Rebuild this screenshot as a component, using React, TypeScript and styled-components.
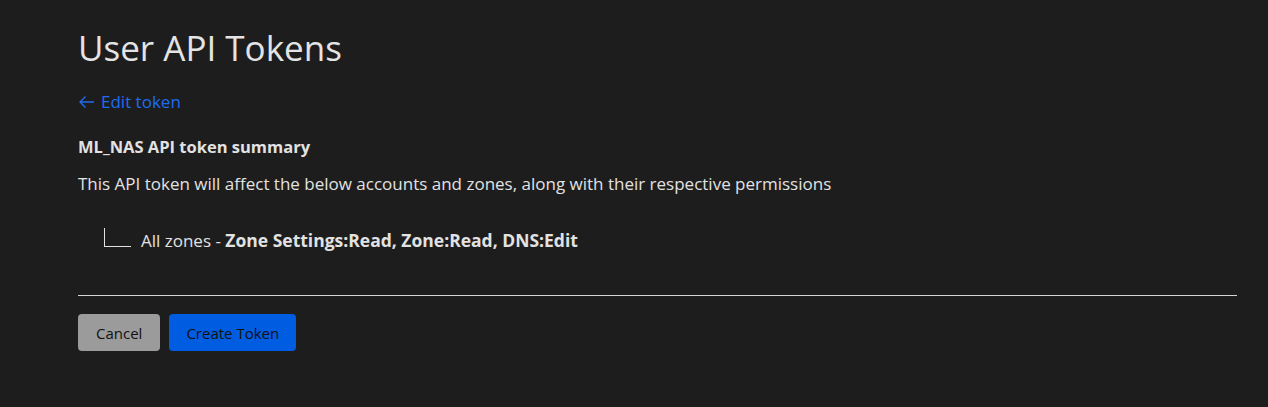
import React from 'react'
import styled, { createGlobalStyle } from 'styled-components'

const GlobalStyle = createGlobalStyle`
  html, body {
    margin: 0;
    padding: 0;
    background: #1d1d1d;
  }
  body {
    font-family: "Open Sans", "Noto Sans", sans-serif;
    color: #e2e2e2;
  }
`

const Page = styled.div`
  min-height: 407px;
  box-sizing: border-box;
  padding: 26px 31px 0 78px;
  background: #1d1d1d;
`

const Title = styled.h1`
  margin: 0;
  font-size: 35px;
  font-weight: 500;
  line-height: 44px;
  color: #e4e4e4;
`

const BackLink = styled.a`
  display: inline-flex;
  align-items: center;
  gap: 6px;
  margin-top: 21px;
  font-size: 17px;
  line-height: 22px;
  color: #1f6cf0;
  text-decoration: none;
  cursor: pointer;
`

const SectionTitle = styled.h2`
  margin: 22px 0 0;
  font-size: 16.5px;
  font-weight: 700;
  line-height: 22px;
  color: #e2e2e2;
`

const Description = styled.p`
  margin: 15px 0 0;
  font-size: 17px;
  line-height: 22px;
  color: #e2e2e2;
`

const Tree = styled.div`
  display: flex;
  align-items: flex-end;
  gap: 10px;
  margin: 33px 0 0 26px;
`

const Branch = styled.span`
  display: block;
  width: 26px;
  height: 18px;
  border-left: 1px solid #e2e2e2;
  border-bottom: 1px solid #e2e2e2;
  margin-bottom: 5px;
`

const TreeText = styled.span`
  font-size: 17px;
  line-height: 22px;
  strong {
    font-size: 17.5px;
    font-weight: 700;
  }
`

const Divider = styled.hr`
  margin: 43px 0 0;
  border: none;
  border-top: 1px solid #d6d6d6;
`

const Actions = styled.div`
  display: flex;
  gap: 9px;
  margin-top: 18px;
`

const Button = styled.button<{ $primary?: boolean }>`
  height: 37px;
  padding: 0 ${p => (p.$primary ? '17px' : '18px')};
  border: none;
  border-radius: 4px;
  font-family: "Open Sans", "Noto Sans", sans-serif;
  font-size: 15px;
  color: #111;
  background: ${p => (p.$primary ? '#005ce0' : '#9b9b9b')};
  cursor: pointer;
`

function ArrowLeft() {
  return (
    <svg width="17" height="14" viewBox="0 0 17 14" fill="none" stroke="#1f6cf0" strokeWidth="1.4">
      <path d="M16 7H2M7.5 1.5L2 7l5.5 5.5" />
    </svg>
  )
}

export default function App() {
  return (
    <>
      <GlobalStyle />
      <Page>
        <Title>User API Tokens</Title>
        <BackLink>
          <ArrowLeft />
          Edit token
        </BackLink>
        <SectionTitle>ML_NAS API token summary</SectionTitle>
        <Description>
          This API token will affect the below accounts and zones, along with their respective permissions
        </Description>
        <Tree>
          <Branch />
          <TreeText>
            All zones - <strong>Zone Settings:Read, Zone:Read, DNS:Edit</strong>
          </TreeText>
        </Tree>
        <Divider />
        <Actions>
          <Button>Cancel</Button>
          <Button $primary>Create Token</Button>
        </Actions>
      </Page>
    </>
  )
}
